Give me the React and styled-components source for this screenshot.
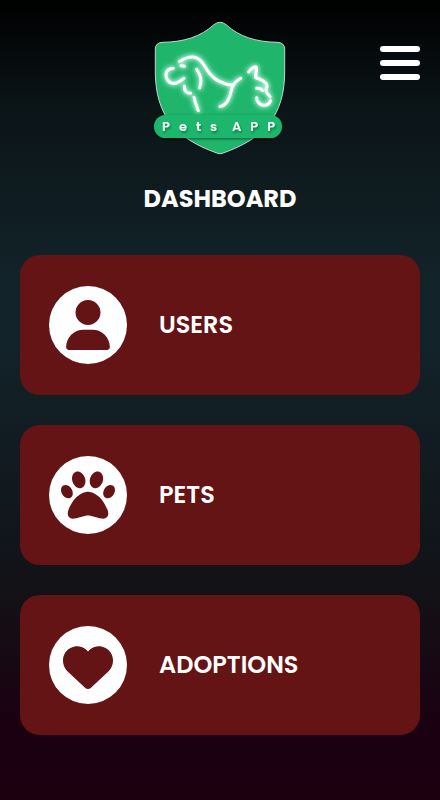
import React from "react";
import styled, { createGlobalStyle } from "styled-components";
import { FaUser, FaPaw, FaHeart } from "react-icons/fa6";

const fontStack = `Poppins, Inter, "Open Sans", sans-serif`;

const GlobalStyle = createGlobalStyle`
  *, *::before, *::after { box-sizing: border-box; }
  body { margin: 0; background: #1c0010; font-family: ${fontStack}; color: #fff; }
`;

const Page = styled.main`
  min-height: 100vh;
  padding: 21px 20px 65px;
  background: linear-gradient(180deg, #000 0%, #0b1417 13%, #122329 35%, #122329 43%, #11161c 66%, #131115 75%, #1b0011 91%, #1c0010 100%);
`;

const Header = styled.header`
  display: grid;
  grid-template-columns: 1fr auto 1fr;
  align-items: start;
`;

const LogoLink = styled.a`
  grid-column: 2;
  display: block;
`;

const LogoArt = styled.svg`
  display: block;
  width: 134px;
  height: 134px;
`;

const LogoText = styled.text`
  font-family: ${fontStack};
  font-size: 13px;
  font-weight: 600;
  letter-spacing: 9px;
  fill: #fff;
`;

const MenuButton = styled.button`
  grid-column: 3;
  justify-self: end;
  display: flex;
  flex-direction: column;
  gap: 8px;
  width: 40px;
  margin: 25px 0 0;
  padding: 0;
  border: 0;
  background: none;
  cursor: pointer;
`;

const MenuBar = styled.span`
  height: 6px;
  border-radius: 3px;
  background: #fff;
`;

const Title = styled.h1`
  margin: 25px 0 38px;
  font-size: 24px;
  font-weight: 700;
  line-height: 37px;
  text-align: center;
`;

const CardList = styled.nav`
  display: flex;
  flex-direction: column;
  gap: 30px;
`;

const Card = styled.a`
  display: flex;
  align-items: center;
  gap: 32px;
  min-height: 140px;
  padding: 0 29px;
  border-radius: 20px;
  background: #641414;
  color: #fff;
  font-size: 24px;
  font-weight: 600;
  line-height: 36px;
  text-decoration: none;
`;

const IconCircle = styled.span`
  display: flex;
  flex: none;
  align-items: center;
  justify-content: center;
  width: 78px;
  height: 78px;
  border-radius: 50%;
  background: #fff;
  color: #641414;
`;

const sections = [
  { label: "USERS", href: "#users", Icon: FaUser, size: 50, viewBox: "0 0 448 512" },
  { label: "PETS", href: "#pets", Icon: FaPaw, size: 54, viewBox: "0 0 512 512" },
  { label: "ADOPTIONS", href: "#adoptions", Icon: FaHeart, size: 50, viewBox: "0 -22 512 512" },
];

function Logo() {
  return (
    <LogoArt viewBox="0 0 134 134" role="img" aria-label="Pets APP">
      <defs>
        <filter id="glow" x="-20%" y="-20%" width="140%" height="140%">
          <feGaussianBlur stdDeviation="2.5" />
        </filter>
        <filter id="shade" x="-10%" y="-30%" width="120%" height="180%">
          <feDropShadow dx="0" dy="1" stdDeviation="1.5" floodColor="#000" floodOpacity="0.5" />
        </filter>
        <filter id="letterShade" x="-10%" y="-30%" width="120%" height="180%">
          <feDropShadow dx="1" dy="2" stdDeviation="1" floodColor="#000" floodOpacity="0.35" />
        </filter>
        <g id="animals" fill="none" strokeLinecap="round" strokeLinejoin="round">
          <path d="M20.3 47.3C14 47.5 12 52 13.3 56.2C15 62 18.5 62.7 22 62.3C25.5 61.9 28.5 59 31 57.3" />
          <path d="M26.3 40.5C31 37.5 36 35.5 40.5 36C49 37 51.5 46.5 57 53C62.5 59.5 71 63.5 80.3 64.3" />
          <path d="M28 44.7L31.5 45.2" />
          <path d="M43.7 48.3C48 55 49.5 60 46.5 67" />
          <path d="M31.3 65C31 69.5 33.5 72.5 37.7 72.3" />
          <path d="M41 76.3C42 82 43.5 85.5 45.3 89.7" />
          <path d="M87.7 57.3C83 60 80 63 79 67C77 75.5 74.5 84.5 67 85.5" />
          <path d="M95.7 51C98 47.5 104.5 42.5 103.5 48.5L102.5 56.5C107 58 113 60 114 64.5C114.5 67 112.5 67.5 113 70C113.5 73 116 73.5 117 75.7" />
          <path d="M103.7 67.3C106.5 66.8 108.5 68 109.5 69.5" />
          <path d="M103.7 76.7C103.5 81 107 84.3 111 84.3C114.5 84.3 116.8 82 117.5 79.5" />
        </g>
      </defs>
      <path
        d="M60.5 4Q67 -1.5 73.5 4C86 15.5 103 21 124 21.3Q131.5 21.5 131.7 28V50C131.7 94 112 117.5 69 132.4Q67 133 65 132.4C22 117.5 2.3 94 2.3 50V28Q2.5 21.5 10 21.3C31 21 48 15.5 60.5 4Z"
        fill="#1fb66c"
        stroke="#c5d3cd"
        strokeWidth="1"
      />
      <use href="#animals" stroke="#c6ffe2" strokeWidth="4.5" filter="url(#glow)" />
      <use href="#animals" stroke="#fff" strokeWidth="3" />
      <rect x="1" y="94" width="128" height="23" rx="11.5" fill="#1fb66c" filter="url(#shade)" />
      <g filter="url(#letterShade)">
        <LogoText x="9" y="110">Pets</LogoText>
        <LogoText x="79" y="110">APP</LogoText>
      </g>
    </LogoArt>
  );
}

export default function App() {
  return (
    <>
      <GlobalStyle />
      <Page>
        <Header>
          <LogoLink href="#home">
            <Logo />
          </LogoLink>
          <MenuButton type="button" aria-label="Open menu">
            <MenuBar />
            <MenuBar />
            <MenuBar />
          </MenuButton>
        </Header>
        <Title>DASHBOARD</Title>
        <CardList aria-label="Dashboard sections">
          {sections.map(({ label, href, Icon, size, viewBox }) => (
            <Card key={label} href={href}>
              <IconCircle>
                <Icon size={size} viewBox={viewBox} aria-hidden="true" />
              </IconCircle>
              {label}
            </Card>
          ))}
        </CardList>
      </Page>
    </>
  );
}
